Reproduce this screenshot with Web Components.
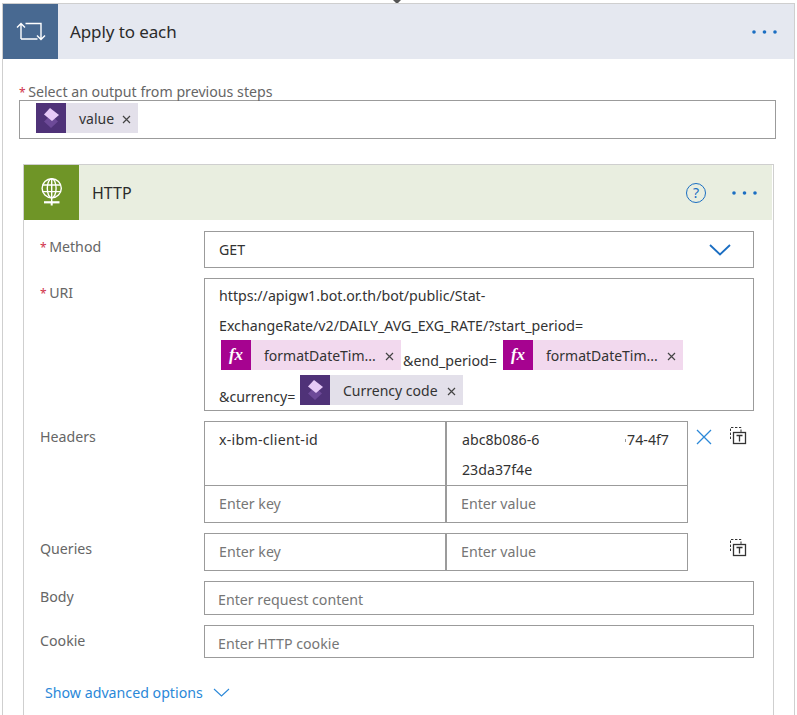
<!DOCTYPE html>
<html lang="en"><head><meta charset="utf-8"><title>Apply to each</title>
<style>
html,body{margin:0;padding:0;height:715px;overflow:hidden;background:#fff}
body{font-family:"Noto Sans","Open Sans","Liberation Sans",sans-serif;font-size:14.2px;color:#333}
</style></head><body>
<flow-connector></flow-connector>
<action-card kind="loop" title="Apply to each">
  <field-label required style="margin:24px 0 0 16px;height:17px;width:fit-content">Select an output from previous steps</field-label>
  <text-box style="margin:0 18px 0 16px;height:39px;padding:2px 0 0 16px">
    <data-token label="value" w="102"></data-token>
  </text-box>
  <action-card nested kind="http" title="HTTP" help style="margin:25px 20px 0 20px">
    <http-form></http-form>
  </action-card>
</action-card>
<script>
const make=(tag,html)=>customElements.define(tag,class extends HTMLElement{
  constructor(){super();this.attachShadow({mode:'open'}).innerHTML=html;}
});
const loopIcon=`<svg width="55" height="55" viewBox="0 0 55 55" fill="none" stroke="#fff" stroke-width="1.4"><path d="M18 35V19.500M14 23.500l4-4 4 4M18 35h16.500"/><path d="M22.500 19.500H38V35M34 31.500l4 4 4-4"/></svg>`;
const globeIcon=`<svg width="55" height="55" viewBox="0 0 55 55" fill="none" stroke="#fff" stroke-width="1.4"><circle cx="27.700" cy="23.300" r="9.600"/><ellipse cx="27.700" cy="23.300" rx="4.400" ry="9.600"/><path d="M18.600 20h18.200M18.600 26.600h18.200M27.700 13.700v19.200M27.700 33v4"/><path d="M20 37.300h15.500" stroke-width="2.200"/><path d="M27.700 38v2.500" stroke-width="2"/></svg>`;
const dots=`<svg width="26" height="4" viewBox="0 0 26 4" fill="#1b6ec2"><circle cx="2" cy="2" r="1.800"/><circle cx="12.500" cy="2" r="1.800"/><circle cx="23" cy="2" r="1.800"/></svg>`;

make('flow-connector',`<style>:host{display:block;height:3px;overflow:hidden;padding-left:393px}
i{display:block;width:0;height:0;border:4px solid transparent;border-top-color:#555;border-bottom:0}</style><i></i>`);

customElements.define('action-card',class extends HTMLElement{
  constructor(){super();const s=this.attachShadow({mode:'open'});
    const http=this.getAttribute('kind')==='http';
    const help=this.hasAttribute('help')?`<span class="help">?</span>`:'';
    s.innerHTML=`<style>
    :host{display:block;border:1px solid #cfcfcf;border-bottom:0;${http?'':'margin:0 2px;'}}
    header{display:flex;align-items:center;height:55px;background:${http?'#e9eee0':'#e5e8f0'};${http?'margin-right:1px;':''}}
    .ic{flex:none;width:55px;height:55px;background:${http?'#6f9527':'#486991'}}
    .ic svg{display:block}
    h2{flex:1;margin:0 0 0 ${http?'13px':'12px'};font:400 ${http?'16px':'17px'}/20px "Noto Sans","Open Sans",sans-serif;color:#2b2b2b;letter-spacing:${http?'0':'-.1px'}}
    .help{box-sizing:border-box;width:20px;height:20px;border:1.300px solid #1b6ec2;border-radius:50%;color:#1b6ec2;font-size:14px;line-height:17px;text-align:center;margin-right:26px}
    .dots{display:flex;margin-right:${http?'14px':'16px'}}
    </style><header><div class="ic">${http?globeIcon:loopIcon}</div><h2>${this.getAttribute('title')}</h2>${help}<span class="dots">${dots}</span></header><slot></slot>`;
  }
});

make('field-label',`<style>:host{display:block;color:#666;line-height:17px;white-space:nowrap}
:host([required])::before{content:"*";color:#d0324a;font-size:12px;margin-right:2.500px}</style><slot></slot>`);

make('text-box',`<style>:host{display:block;box-sizing:border-box;border:1px solid #9b9b9b;background:#fff}</style><slot></slot>`);

const diamonds=`<svg width="30" height="30" viewBox="0 0 30 30"><rect width="30" height="30" fill="#4f3278"/><path d="M15 12l7 6.500-7 6.500-7-6.500z" fill="#6d4a98"/><path d="M14 5l9 7-7 6-8-6.500z" fill="#e6c9f7"/></svg>`;
customElements.define('data-token',class extends HTMLElement{
  constructor(){super();const s=this.attachShadow({mode:'open'});
    const fx=this.hasAttribute('fx');
    s.innerHTML=`<style>
    :host{display:inline-flex;box-sizing:border-box;width:${this.getAttribute('w')}px;align-items:center;height:30px;background:${fx?'#f2d9ee':'#e3e0ea'};color:#333;flex:none;white-space:nowrap}
    .i{width:30px;height:30px;flex:none;background:#a60390;color:#fff;text-align:center;font:italic 700 17px/29px "Liberation Serif",serif}
    .i svg{display:block}
    .t{margin-left:13px;font-size:14px}
    svg.x{margin:2px 7px 0 auto;flex:none}
    </style>${fx?'<span class="i">fx</span>':`<span class="i" style="background:none">${diamonds}</span>`}<span class="t">${this.getAttribute('label')}</span><svg class="x" width="9" height="9" viewBox="0 0 9 9" stroke="#444" stroke-width="1.200"><path d="M1 1l7 7M8 1L1 8"/></svg>`;
  }
});

const trash=`<svg width="18" height="19" viewBox="0 0 18 19" fill="none" stroke="#333" style="display:block"><path d="M1.500 13V1.500H12V6" stroke-dasharray="2.400 1.600"/><rect x="4.500" y="6.500" width="12" height="11" stroke-width="1.300"/><path d="M7.500 9.500h6M10.500 9.500v6" stroke-width="1.300"/></svg>`;
const closeX=`<svg width="16" height="16" viewBox="0 0 16 16" stroke="#2b88d8" stroke-width="1.300" style="display:block"><path d="M1 1l14 14M15 1L1 15"/></svg>`;

make('http-form',`<style>
:host{display:grid;grid-template-columns:164px 550px;row-gap:10px;padding:11px 0 30px 16px;--b:1px solid #9b9b9b}
.lab{color:#666;line-height:17px;padding-top:7px}
.lab.r::before{content:"*";color:#d0324a;font-size:12px;margin-right:2.500px}
.lab.u{padding-top:6px}
.box{box-sizing:border-box;border:var(--b);display:flex;align-items:center;padding-left:14px;color:#333}
.ph{color:#767676;padding-top:4px}
.sel{height:37px;justify-content:space-between;padding-right:22px}
.uri{height:133px;display:block;padding:0 0 0 14px}
.ln{height:31px;line-height:31px;white-space:nowrap}
.ln.first{line-height:33px}
.tk{display:flex;align-items:flex-end;height:30px;padding-left:2px;margin-top:-1px}
.tk span{box-sizing:border-box;width:102px;padding-left:2px;line-height:19px;white-space:nowrap}
.tk2{display:flex;align-items:flex-end;margin-top:5px}
.tk2 span{width:81px;line-height:20px;white-space:nowrap;margin-bottom:-2px}
.kv{display:grid;grid-template-columns:242px 242px 24px 42px;width:550px;align-items:start}
.c{box-sizing:border-box;border:var(--b);padding-left:14px}
.a{height:65px;line-height:31px;padding-top:2px}
.a .v{display:flex;justify-content:space-between;padding:0 18px 0 1px;height:30px}
.a i{display:inline-block;width:1px;height:3px;background:#999;margin-right:1px;vertical-align:3px}
.b{height:37px;border-top:0;line-height:36px;color:#767676}
.q{height:38px;border-top:var(--b);line-height:36px}
.x{padding:8px 0 0 8px}
.t{padding:5px 0 0 17px}
.adv{grid-column:1/3;display:flex;align-items:center;gap:10px;color:#2b88d8;margin:4px 0 0 5px;height:40px}
</style>
<div class="lab r">Method</div>
<div class="box sel"><span>GET</span><svg width="22" height="12" viewBox="0 0 22 12" fill="none" stroke="#1b6ec2" stroke-width="1.800"><path d="M1 1l10 9.500L21 1"/></svg></div>
<div class="lab r u">URI</div>
<div class="box uri">
  <div class="ln first">https://apigw1.bot.or.th/bot/public/Stat-</div>
  <div class="ln">ExchangeRate/v2/DAILY_AVG_EXG_RATE/?start_period=</div>
  <div class="tk"><data-token fx w="180" label="formatDateTim..."></data-token><span>&amp;end_period=</span><data-token fx w="180" label="formatDateTim..."></data-token></div>
  <div class="tk2"><span>&amp;currency=</span><data-token w="163" label="Currency code"></data-token></div>
</div>
<div class="lab">Headers</div>
<div class="kv">
  <div class="c a" style="letter-spacing:.25px">x-ibm-client-id</div>
  <div class="c a"><div class="v"><span>abc8b086-6</span><span><i></i>74-4f7</span></div><div style="padding-left:1px">23da37f4e</div></div>
  <div class="x">CLOSEX</div><div class="t">TRASH</div>
  <div class="c b">Enter key</div><div class="c b">Enter value</div>
</div>
<div class="lab">Queries</div>
<div class="kv">
  <div class="c b q">Enter key</div><div class="c b q">Enter value</div>
  <div></div><div class="t">TRASH</div>
</div>
<div class="lab">Body</div>
<div class="box" style="height:34px;padding-left:13px"><span class="ph" style="padding-top:2px">Enter request content</span></div>
<div class="lab">Cookie</div>
<div class="box" style="height:33px;padding-left:13px"><span class="ph">Enter HTTP cookie</span></div>
<div class="adv"><span>Show advanced options</span><svg width="17" height="9" viewBox="0 0 17 9" fill="none" stroke="#2b88d8" stroke-width="1.100"><path d="M1 1l7.500 7L16 1"/></svg></div>
`.replace(/CLOSEX/g,closeX).replace(/TRASH/g,trash));
</script>
</body></html>
